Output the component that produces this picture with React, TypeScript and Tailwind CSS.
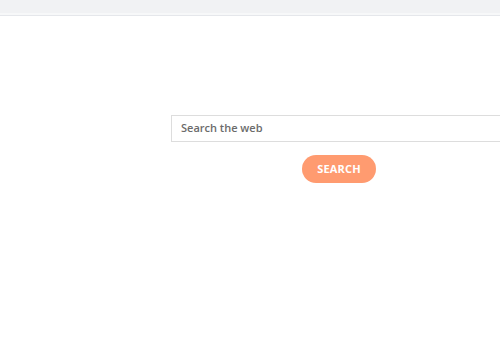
export default function App() {
  return (
    <div className="w-[500px] h-[350px] overflow-hidden bg-white" style={{ fontFamily: '"Open Sans", "Liberation Sans", sans-serif' }}>
      <div className="h-[13px] bg-[#f1f2f4]" />
      <div className="h-[2px] bg-[#f7f8f9]" />
      <div className="h-[1px] bg-[#e5e7eb]" />
      <div className="pt-[99px] pl-[171px]">
        <div className="w-[336px] flex flex-col items-center">
          <div className="w-full h-[27px] border border-[#dddddd] bg-white flex items-center pl-[9px] text-[11px] font-semibold text-[#6b6b6b]">
            Search the web
          </div>
          <button className="mt-[13px] w-[74px] h-[28px] rounded-full bg-[#ff9b70] text-white text-[11px] font-bold tracking-[0.2px]">
            SEARCH
          </button>
        </div>
      </div>
    </div>
  );
}
